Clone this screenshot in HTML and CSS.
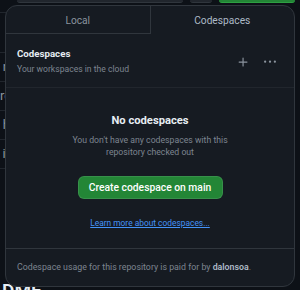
FILE: index.html
```html
<!DOCTYPE html>
<html lang="en">
<head>
  <meta charset="UTF-8">
  <title>Code</title>
  <link rel="stylesheet" href="styles.css">
</head>
<body>
  <div class="page">
    <div class="topbar">
      <div class="btn-edge"></div>
      <div class="btn-edge small"></div>
      <div class="btn-edge green"></div>
    </div>
    <div class="files">
      <div class="file-head"></div>
      <div class="file-row">n</div>
      <div class="file-row">re</div>
      <div class="file-row">h</div>
      <div class="file-row">it</div>
    </div>
    <div class="readme"><span>DME</span></div>
  </div>

  <div class="popover">
    <div class="tabs">
      <div class="tab">Local</div>
      <div class="tab selected">Codespaces</div>
    </div>

    <div class="cs-header">
      <div class="cs-titles">
        <div class="cs-title">Codespaces</div>
        <div class="cs-sub">Your workspaces in the cloud</div>
      </div>
      <div class="cs-actions">
        <svg class="icon plus" viewBox="0 0 16 16"><path d="M7.75 2a.75.75 0 0 1 .75.75V7h4.25a.75.75 0 0 1 0 1.5H8.5v4.25a.75.75 0 0 1-1.5 0V8.5H2.75a.75.75 0 0 1 0-1.5H7V2.75A.75.75 0 0 1 7.75 2Z"/></svg>
        <svg class="icon dots" viewBox="0 0 16 16"><path d="M8 9a1.5 1.5 0 1 0 0-3 1.5 1.5 0 0 0 0 3ZM1.5 9a1.5 1.5 0 1 0 0-3 1.5 1.5 0 0 0 0 3Zm13 0a1.5 1.5 0 1 0 0-3 1.5 1.5 0 0 0 0 3Z"/></svg>
      </div>
    </div>

    <div class="blank">
      <h3>No codespaces</h3>
      <p>You don't have any codespaces with this<br>repository checked out</p>
      <button class="btn-primary">Create codespace on main</button>
      <a href="#" class="learn">Learn more about codespaces...</a>
    </div>

    <div class="cs-footer">
      Codespace usage for this repository is paid for by <strong>dalonsoa</strong>.
    </div>
  </div>
</body>
</html>
```

FILE: styles.css
```css
body {
  margin: 0;
  background: #0d1117;
  font-family: Roboto, "Noto Sans", sans-serif;
  color: #e6edf3;
  width: 300px;
  height: 290px;
  overflow: hidden;
}

/* page behind the popover */
.page {
  height: 290px;
  display: flex;
  flex-direction: column;
}
.topbar {
  display: flex;
  gap: 7px;
  padding-left: 17px;
  height: 2px;
}
.btn-edge {
  width: 166px;
  height: 2px;
  background: #21262d;
  border-bottom: 1px solid #30363d;
  border-radius: 0 0 6px 6px;
}
.btn-edge.small { width: 22px; }
.btn-edge.green {
  width: 76px;
  background: #238636;
  border-bottom-color: #2ea043;
}
.files {
  margin-top: 10px;
  width: 10px;
  border-top: 1px solid #21262d;
}
.file-head {
  height: 39px;
  border-bottom: 1px solid #21262d;
}
.file-row {
  height: 28px;
  border-bottom: 1px solid #21262d;
  font-size: 13px;
  line-height: 28px;
  color: #8b949e;
  text-align: right;
}
.readme {
  margin-top: auto;
  height: 7px;
  overflow: hidden;
  padding-left: 2px;
}
.readme span {
  display: block;
  font-size: 19px;
  font-weight: 600;
  line-height: 24px;
  margin-top: -4px;
  color: #e6edf3;
}

/* popover */
.popover {
  position: absolute;
  left: 5px;
  top: 5px;
  width: 288px;
  height: 280px;
  background: #161b22;
  border: 1px solid #30363d;
  border-radius: 12px;
  display: flex;
  flex-direction: column;
  overflow: hidden;
}
.tabs {
  display: flex;
  height: 28px;
}
.tab {
  flex: 1;
  text-align: center;
  font-size: 10.2px;
  line-height: 29px;
  color: #8b949e;
  border-bottom: 1px solid #30363d;
}
.tab:first-child { border-right: 1px solid #30363d; }
.tab.selected {
  border-bottom-color: transparent;
  color: #adbac7;
}

.cs-header {
  display: flex;
  align-items: center;
  padding: 12px 18px 11px 11px;
  border-bottom: 1px solid #21262d;
}
.cs-titles { flex: 1; }
.cs-title {
  font-size: 9.7px;
  font-weight: 700;
  line-height: 16px;
}
.cs-sub {
  font-size: 8.6px;
  line-height: 14px;
  color: #7d8590;
}
.cs-actions {
  display: flex;
  align-items: center;
  gap: 15px;
  margin-top: 2px;
}
.icon { fill: #8b949e; }
.icon.plus {
  width: 12.5px;
  height: 12.5px;
}
.icon.dots {
  width: 12px;
  height: 12px;
}

.blank {
  flex: 1;
  display: flex;
  flex-direction: column;
  align-items: center;
  text-align: center;
  border-bottom: 1px solid #30363d;
}
.blank h3 {
  margin: 24px 0 0;
  font-size: 11.2px;
  font-weight: 700;
  line-height: 18px;
}
.blank p {
  margin: 4px 0 0;
  font-size: 8.7px;
  line-height: 12px;
  color: #7d8590;
}
.btn-primary {
  margin-top: 18px;
  width: 145px;
  height: 23px;
  padding: 0;
  background: #238636;
  color: #fff;
  border: 1px solid rgba(240, 246, 252, 0.1);
  border-radius: 6px;
  font-family: inherit;
  font-size: 10.3px;
  font-weight: 500;
}
.learn {
  margin-top: 19px;
  font-size: 8.4px;
  color: #4493f8;
}

.cs-footer {
  height: 37px;
  line-height: 37px;
  padding-left: 11px;
  font-size: 8.8px;
  color: #7d8590;
}
.cs-footer strong {
  color: #adbac7;
  font-weight: 600;
}
```
